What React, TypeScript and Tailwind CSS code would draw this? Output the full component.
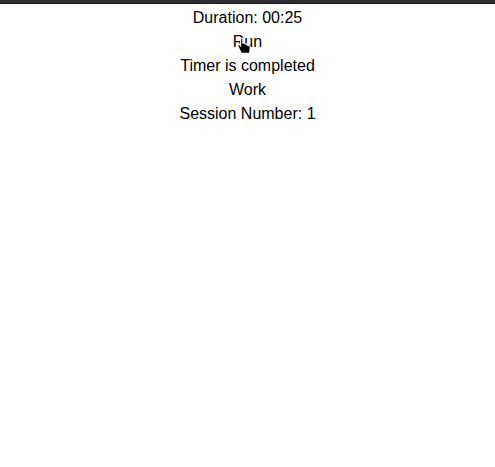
import React from "react";

const HandCursor = () => (
    <svg
        width="16"
        height="18"
        viewBox="0 0 14 16"
        className="absolute left-[3px] top-[7px]"
    >
        <path
            d="M4 1.5 L4 8 L3 7 Q1.5 6 1.5 8 L4.5 14.5 L12 14.5 L12.5 9 Q12.5 7.5 11 7.5 L10.5 7.5 Q10 6.5 9 6.5 Q8.5 5.5 7.5 5.5 L6 5.5 L6 1.5 Q5 0.5 4 1.5 Z"
            fill="#000"
            stroke="#fff"
            strokeWidth="1"
        />
    </svg>
);

const App = () => {
    return (
        <div className="w-full min-h-screen bg-white font-['Liberation_Sans',Arial,sans-serif] text-black">
            <div className="h-[4px] bg-[#2e2c2f] border-b border-[#1a1820]" />
            <div className="flex flex-col items-center text-base leading-6 pt-[2px]">
                <p>Duration: 00:25</p>
                <div className="relative">
                    <button className="cursor-pointer">Run</button>
                    <HandCursor />
                </div>
                <p>Timer is completed</p>
                <p>Work</p>
                <p>Session Number: 1</p>
            </div>
        </div>
    );
};

export default App;
